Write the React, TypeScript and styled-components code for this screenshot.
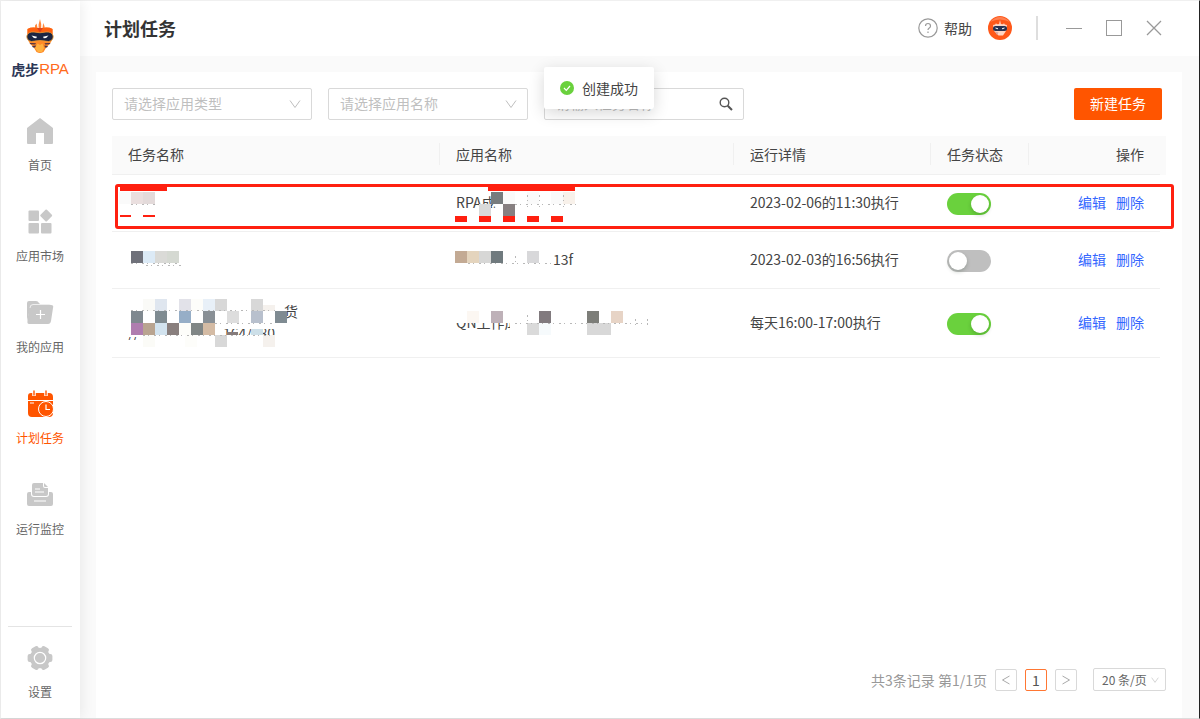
import React from "react";
import styled, { createGlobalStyle, css } from "styled-components";

const colors = {
  brand: "#ff5500",
  navy: "#2b3756",
  text: "#444444",
  muted: "#999999",
  icon: "#c8c8c8",
  line: "#f0f0f0",
  border: "#d9d9d9",
  surface: "#fafafa",
  link: "#3366ff",
  success: "#6ad13d",
  mark: "#ff2010",
};

const GlobalStyle = createGlobalStyle`
  *, *::before, *::after { box-sizing: border-box; }
  body {
    margin: 0;
    color: ${colors.text};
    background: #fff;
    font: 14px/22px "Noto Sans CJK SC", sans-serif;
  }
  button, input, select { font: inherit; color: inherit; }
`;

const Window = styled.div`
  display: flex;
  min-height: 100vh;
  border: 1px solid #f0f0f0;
  border-right-color: #222;
  border-bottom-color: #dcdcdc;
`;

const Sidebar = styled.nav`
  display: flex;
  flex: none;
  flex-direction: column;
  align-items: center;
  width: 79px;
  padding: 18px 8px 16px 7px;
  background: #fff;
  box-shadow: 2px 0 12px rgba(0, 0, 0, 0.07);
  z-index: 1;
`;

const Brand = styled.div`
  display: flex;
  flex-direction: column;
  align-items: center;
  gap: 3px;
  margin-bottom: 36px;
`;

const BrandName = styled.div`
  display: flex;
  align-items: center;
  height: 24px;
  color: ${colors.navy};
  font-size: 14px;
  font-weight: 700;
`;

const BrandSuffix = styled.span`
  color: #ff6a1a;
  font-family: "Liberation Sans Narrow", "Liberation Sans", sans-serif;
  font-size: 15px;
  font-weight: 400;
`;

const NavItem = styled.a<{ $active?: boolean }>`
  display: flex;
  flex-direction: column;
  align-items: center;
  gap: 10px;
  height: 91px;
  color: ${(p) => (p.$active ? colors.brand : "#666")};
  font-size: 12px;
  line-height: 20px;
  text-decoration: none;
  svg { color: ${(p) => (p.$active ? colors.brand : colors.icon)}; }
`;

const SettingsArea = styled.div`
  display: flex;
  justify-content: center;
  width: 100%;
  margin-top: auto;
  padding-top: 17px;
  border-top: 1px solid #e4e4e4;
  ${NavItem} { height: auto; }
`;

const Main = styled.main`
  display: flex;
  flex: 1;
  flex-direction: column;
  min-width: 0;
  background: ${colors.surface};
`;

const TopBar = styled.header`
  display: flex;
  align-items: center;
  justify-content: space-between;
  height: 55px;
  padding: 0 37px 2px 24px;
  background: #fff;
`;

const Title = styled.h1`
  margin: 0;
  color: #333;
  font-size: 18px;
  line-height: 26px;
`;

const TopActions = styled.div`
  display: flex;
  align-items: center;
  gap: 24px;
`;

const PlainButton = styled.button`
  display: flex;
  align-items: center;
  gap: 6px;
  padding: 0;
  border: 0;
  background: none;
  cursor: pointer;
`;

const Account = styled.div`
  display: flex;
  align-items: center;
  gap: 16px;
`;

const Divider = styled.span`
  width: 2px;
  height: 24px;
  margin-right: 4px;
  background: #dedede;
`;

const Card = styled.section`
  display: flex;
  flex: 1;
  flex-direction: column;
  margin: 16px 17px 0 16px;
  padding: 16px 16px 27px;
  background: #fff;
`;

const Filters = styled.form`
  display: flex;
  gap: 16px;
  margin-bottom: 16px;
  padding-right: 4px;
`;

const field = css`
  width: 100%;
  height: 32px;
  border: 1px solid ${colors.border};
  border-radius: 2px;
  background: #fff;
  outline: none;
  appearance: none;
`;

const Field = styled.label`
  display: grid;
  align-items: center;
  width: 200px;
  > * { grid-area: 1 / 1; }
  > svg { justify-self: end; margin-right: 11px; pointer-events: none; }
`;

const FilterSelect = styled.select`
  ${field}
  padding: 0 28px 2px 11px;
  color: #bfbfbf;
`;

const SearchInput = styled.input`
  ${field}
  padding: 0 36px 2px 11px;
  &::placeholder { color: #bfbfbf; opacity: 1; }
`;

const SearchButton = styled(PlainButton)`
  justify-self: end;
  margin-right: 11px;
`;

const CreateButton = styled.button`
  width: 88px;
  height: 32px;
  margin-left: auto;
  padding: 0 0 2px;
  border: 0;
  border-radius: 2px;
  color: #fff;
  background: ${colors.brand};
  cursor: pointer;
`;

const TableArea = styled.div`
  position: relative;
  padding-right: 6px;
`;

const Table = styled.table`
  width: 100%;
  border-collapse: separate;
  border-spacing: 0;
  table-layout: fixed;
`;

const HeadCell = styled.th`
  height: 39px;
  padding: 0 0 2px;
  border-bottom: 1px solid ${colors.line};
  background: ${colors.surface};
  font-weight: 400;
  text-align: left;
  &:last-child {
    box-shadow: 6px 0 0 ${colors.surface};
    text-align: right;
  }
`;

const HeadLabel = styled.div`
  padding: 0 16px;
  border-right: 1px solid ${colors.line};
  ${HeadCell}:last-child & { border-right: 0; }
`;

const Cell = styled.td`
  position: relative;
  height: 57px;
  padding: 11px 16px 13px;
  border-bottom: 1px solid ${colors.line};
`;

const NameText = styled.div<{ $align?: "right" }>`
  width: 170px;
  text-align: ${(p) => p.$align ?? "left"};
`;

const AppText = styled.div<{ $indent?: boolean }>`
  padding-left: ${(p) => (p.$indent ? "97px" : "0")};
`;

const MosaicLayer = styled.svg`
  position: absolute;
  top: 0;
  left: 0;
`;

const RowMark = styled.div`
  position: absolute;
  top: 48px;
  right: -8px;
  left: 3px;
  height: 45px;
  border: 3px solid ${colors.mark};
  border-radius: 3px;
  pointer-events: none;
`;

const Switch = styled.input`
  display: block;
  width: 44px;
  height: 22px;
  margin: 4px 0 0;
  padding: 2px;
  border-radius: 11px;
  background: #bfbfbf;
  appearance: none;
  cursor: pointer;
  &::before {
    display: block;
    width: 18px;
    height: 18px;
    border-radius: 50%;
    background: #fff;
    box-shadow: 0 2px 4px rgba(0, 35, 11, 0.2);
    content: "";
  }
  &:checked { background: ${colors.success}; }
  &:checked::before { margin-left: 22px; }
`;

const RowActions = styled.div`
  display: flex;
  justify-content: flex-end;
  gap: 10px;
`;

const Link = styled.a`
  color: ${colors.link};
  text-decoration: none;
`;

const Pagination = styled.footer`
  display: flex;
  align-items: center;
  justify-content: flex-end;
  gap: 8px;
  margin-top: auto;
  color: ${colors.muted};
`;

const PageButton = styled.button<{ $current?: boolean }>`
  display: flex;
  align-items: center;
  justify-content: center;
  width: 22px;
  height: 22px;
  padding: 0;
  border: 1px solid ${(p) => (p.$current ? "#ff7733" : colors.border)};
  border-radius: 2px;
  color: ${(p) => (p.$current ? "#555" : "#aaa")};
  background: #fff;
`;

const PageSize = styled(Field)`
  width: 73px;
  margin-left: 8px;
  > svg { margin-right: 7px; }
`;

const PageSizeSelect = styled.select`
  ${field}
  height: 23px;
  padding: 0 16px 0 8px;
  color: #666;
  font-size: 12px;
`;

const Toast = styled.div`
  position: absolute;
  top: 67px;
  left: calc(50% - 56px);
  display: flex;
  align-items: center;
  gap: 8px;
  height: 42px;
  padding: 0 16px;
  border-radius: 2px;
  background: #fff;
  box-shadow: 0 4px 16px rgba(0, 0, 0, 0.16);
  z-index: 2;
`;

function TigerLogo() {
  return (
    <svg width="28" height="35" viewBox="0 0 28 35" aria-hidden="true">
      <path d="M12.600 9V5.500L14 0l1.200 5V9zM9 9.500V6.500l1.600-2 1 5zM16.500 9.500l.6-5.500 1.400 3v2.500z" fill="#ff873c" />
      <path d="M1.500 10Q6 7.500 14 9.500Q22 7.500 26.500 10V19Q25 25 20.500 28L17.500 33Q14 35 10.500 33L7.500 28Q3 25 1.500 19Z" fill="#ff8a27" />
      <path d="M1.500 10Q6 7.500 14 9.500Q22 7.500 26.500 10V15H1.500Z" fill="#ff6010" />
      <path d="M11 9l3 4.500L17 9z" fill="#de421b" />
      <path d="M.8 17Q2 12.500 8 13Q14 14.500 20 13Q26 12.500 27.200 17Q27.500 21.500 22.500 22.500Q14 20.500 5.500 22.500Q.5 21.500 .8 17Z" fill="#1c2543" stroke="#ed9c35" strokeWidth=".8" />
      <path d="M5.500 16.500l5.500 1.200-.8 1.500Q7 19.200 5.500 16.500ZM22.500 16.500l-5.500 1.200 .8 1.500Q21 19.200 22.500 16.500Z" fill="#fff" />
      <path d="M3.500 24l6.500 .2-.8 1.200-4.500-.2zM6 27l4-.4-.6 1.800-2.400 .2zM24.500 24l-6 .2.800 1.200 4.200-.2zM22 27l-3.600-.4.6 1.800 2 .2z" fill="#493045" />
      <path d="M11.500 24.500l2.500 1.500 2.500-1.500 1.500 4.500-2 4h-4l-3-4z" fill="#ffb13f" />
    </svg>
  );
}

function Avatar() {
  return (
    <svg width="24" height="24" viewBox="0 0 24 24" role="img" aria-label="账户">
      <circle cx="12" cy="12" r="12" fill="#ff5819" />
      <path d="M2 6Q12-4 22 6Q12 1 2 6Z" fill="#ff8051" />
      <path d="M11 9l1-5 1 5zM7 10l1-3 1 2zM15 9l1-2 1 3z" fill="#ffe0d2" />
      <path d="M5 9Q12 7 19 9L18 15L15 19.500H10.500L6 15Z" fill="#ffd5c3" />
      <rect x="5" y="10" width="14" height="5" rx="2.5" fill="#283150" />
      <path d="M7.500 12l2.500 .8M16.500 12l-2.500 .8" stroke="#fff" />
      <path d="M7 15.500l3.500 1-1.500 2.500z" fill="#d9a3a0" />
    </svg>
  );
}

const HomeIcon = () => (
  <svg width="28" height="28" viewBox="0 0 28 28" fill="currentColor">
    <path d="M14 1 27 11V26a1 1 0 0 1-1 1H18V16H10V27H2a1 1 0 0 1-1-1V11Z" />
  </svg>
);

const MarketIcon = () => (
  <svg width="28" height="28" viewBox="0 0 28 28" fill="currentColor">
    <rect x="2.500" y="2.500" width="10.500" height="10.500" rx="1" />
    <rect x="2.500" y="15" width="10.500" height="10.500" rx="1" />
    <rect x="15" y="15" width="10.500" height="10.500" rx="1" />
    <rect x="15.700" y="3" width="9" height="9" rx="1" transform="rotate(45 20.200 7.500)" />
  </svg>
);

const FolderIcon = () => (
  <svg width="28" height="28" viewBox="0 0 28 28" fill="currentColor">
    <path d="M1 22V4Q1 2 3 2H10Q12 2 13 4L14 5H23Q25 5 25 7H7Q4 7 4 10Z" />
    <path d="M6 6H25Q28 6 27 9L25 22Q24.500 25 22 25H3Q1 25 1.500 22L3 9Q3.300 6 6 6Z" />
    <path d="M4 9Q4 5.500 7 5.500H25" fill="none" stroke="#fff" strokeWidth=".7" />
    <path d="M10 15.500H19M14.500 11V20" stroke="#fff" strokeWidth="1.200" />
  </svg>
);

const CalendarIcon = () => (
  <svg width="28" height="28" viewBox="0 0 28 28" fill="currentColor">
    <path d="M5 3H23Q27 3 27 7V10H2V6Q2 3 5 3ZM2 11H27V23Q27 27 23 27H6Q2 27 2 23Z" />
    <path d="M8 1V6M20 1V6" stroke="#fff" strokeWidth="3.500" />
    <path d="M8 1V5M20 1V5" stroke="currentColor" strokeWidth="1.400" strokeLinecap="round" />
    <path d="M4 13H8" stroke="#fff" />
    <circle cx="20" cy="19" r="7.500" stroke="#fff" />
    <path d="M20 14.500V19.500H24" fill="none" stroke="#fff" strokeWidth="1.200" />
  </svg>
);

const MonitorIcon = () => (
  <svg width="28" height="28" viewBox="0 0 28 28" fill="currentColor">
    <path d="M3 11H5V13Q5 16 8 16H20Q23 16 23 13V11H25Q27 11 27 13V23Q27 25 25 25H3Q1 25 1 23V13Q1 11 3 11Z" />
    <path d="M8 2H17V5Q17 7 19 7H22V13Q22 15 20 15H8Q6 15 6 13V4Q6 2 8 2ZM18 2L22 6H19Q18 6 18 5Z" />
    <path d="M9 8H14M9 11H18M8 20H20" stroke="#fff" strokeWidth="1.200" />
  </svg>
);

const GearIcon = () => (
  <svg width="28" height="28" viewBox="0 0 28 28" fill="currentColor">
    <circle cx="14" cy="14" r="10.300" />
    {[30, 90, 150].map((angle) => (
      <rect key={angle} x="10" y="1.600" width="8" height="24.800" rx="2" transform={`rotate(${angle} 14 14)`} />
    ))}
    <circle cx="14" cy="14" r="5.700" fill="none" stroke="#fff" strokeWidth="1.200" />
  </svg>
);

const Chevron = ({ size = 12 }: { size?: number }) => (
  <svg width={size} height={size} viewBox="0 0 12 12" fill="none" stroke="#bfbfbf" aria-hidden="true">
    <path d="M1 2.500 6 9.500 11 2.500" />
  </svg>
);

type Block = [x: number, y: number, fill: string, width?: number, height?: number];

/* Privacy mosaic laid over a cell's text. */
function Mosaic({ width, height, blocks, specks }: { width: number; height: number; blocks: Block[]; specks?: string }) {
  return (
    <MosaicLayer width={width} height={height} aria-hidden="true">
      {blocks.map(([x, y, fill, w = 12, h = 12], i) => (
        <rect key={i} x={x} y={y} width={w} height={h} fill={fill} />
      ))}
      {specks && <path d={specks} stroke="#b8b8b8" strokeDasharray="2 3 1 5" fill="none" />}
    </MosaicLayer>
  );
}

const red = colors.mark;

const rows = [
  {
    id: "1",
    name: (
      <Mosaic
        width={180}
        height={56}
        blocks={[
          [8, 12, red, 47, 4],
          [7, 17, "#fafafa"], [19, 17, "#eadfdf"], [31, 17, "#e3dada"],
          [8, 40, red, 11, 2], [31, 40, red, 12, 2],
        ]}
        specks="M19 29.500H43"
      />
    ),
    app: (
      <>
        <AppText>RPA成</AppText>
        <Mosaic
          width={200}
          height={56}
          blocks={[
            [15, 33, "#fff", 48, 9],
            [48, 11, red, 87, 5],
            [51, 17, "#777c7e"], [63, 17, "#fafafa"], [87, 17, "#fafafa"], [111, 17, "#fafafa"], [123, 17, "#f8f1ea"],
            [39, 29, "#d9d9d9"], [63, 29, "#878081"],
            [15, 41, red, 12, 6], [39, 41, red, 12, 6], [63, 41, red, 12, 6], [87, 41, red, 12, 6], [111, 41, red, 12, 6],
          ]}
          specks="M75 29.500H137M87.500 20V32M99.500 20V32M123.500 20V32"
        />
      </>
    ),
    detail: "2023-02-06的11:30执行",
    on: true,
  },
  {
    id: "2",
    name: (
      <Mosaic
        width={180}
        height={56}
        blocks={[[19, 19, "#6f717a"], [31, 19, "#dceaf6"], [43, 19, "#dadad7"], [55, 19, "#d5d9d2"]]}
        specks="M19 31.500H68M34 33.500H72"
      />
    ),
    app: (
      <>
        <AppText $indent>13f</AppText>
        <Mosaic
          width={112}
          height={56}
          blocks={[[15, 19, "#c3aa94"], [27, 19, "#e4d4bd"], [39, 19, "#d7d7d6"], [51, 19, "#707a7e"], [87, 19, "#d8d8da"]]}
          specks="M28 31.500H111M75.500 24V32"
        />
      </>
    ),
    detail: "2023-02-03的16:56执行",
    on: false,
  },
  {
    id: "3",
    name: (
      <>
        <NameText $align="right">货</NameText>
        <NameText>//&emsp;&emsp;&emsp;&emsp;&emsp;&emsp;164/180</NameText>
        <Mosaic
          width={200}
          height={68}
          blocks={[
            [14, 34, "#fff", 16, 14], [14, 51, "#fff", 16, 9], [30, 34, "#fff", 141, 6], [30, 46, "#fff", 150, 14],
            [31, 10, "#fafaf7"], [43, 10, "#dfe6ef"], [67, 10, "#e2e2e9"], [79, 10, "#fdfdfa"], [91, 10, "#e8f0f8"], [103, 10, "#d8d8d8"], [139, 10, "#d8d8d8"], [151, 16, "#f5f1ed", 12, 6],
            [19, 22, "#7f888f"], [43, 22, "#7f8b91"], [67, 22, "#96aec7"], [91, 22, "#899096"], [115, 22, "#dddddd"], [139, 22, "#b8c0cd"], [163, 22, "#7f8b92"],
            [19, 34, "#af7daf"], [31, 34, "#b9a490"], [43, 34, "#d2e3ef"], [55, 34, "#897f7e"], [67, 34, "#fdfdfa"], [79, 34, "#808686"], [91, 34, "#d4bba4"], [115, 43, "#857b7b", 11, 3], [139, 40, "#cddfe8", 12, 6],
            [31, 46, "#fbfbf7"], [73, 46, "#fdfdfa"], [103, 46, "#d8d8d8"], [151, 46, "#f5f1ed"],
          ]}
          specks="M19 21.500H163M103 34.500H163M31 46.500H163"
        />
      </>
    ),
    app: (
      <>
        <AppText>QN工作成</AppText>
        <Mosaic
          width={220}
          height={68}
          blocks={[
            [15, 22, "#fff", 64, 12], [70, 34, "#fff", 20, 12],
            [27, 22, "#fcf7f2"], [51, 22, "#beb1b8"], [99, 22, "#817a7e"], [147, 22, "#7d7e79"], [171, 22, "#e7d4c6"],
            [87, 34, "#dadada"], [99, 34, "#f6fafc"], [147, 34, "#d8d8d8"], [159, 34, "#d8d8d8"],
          ]}
          specks="M75 34.500H208M87.500 26V36M195.500 30V38M207.500 30V40"
        />
      </>
    ),
    detail: "每天16:00-17:00执行",
    on: true,
  },
];

const navItems = [
  { label: "首页", icon: <HomeIcon /> },
  { label: "应用市场", icon: <MarketIcon /> },
  { label: "我的应用", icon: <FolderIcon /> },
  { label: "计划任务", icon: <CalendarIcon />, active: true },
  { label: "运行监控", icon: <MonitorIcon /> },
];

const columns = [
  { label: "任务名称", width: "31.3%" },
  { label: "应用名称", width: "28.05%" },
  { label: "运行详情", width: "18.8%" },
  { label: "任务状态", width: "9.35%" },
  { label: "操作", width: "12.5%" },
];

export default function App() {
  return (
    <>
      <GlobalStyle />
      <Window>
        <Sidebar>
          <Brand>
            <TigerLogo />
            <BrandName>虎步<BrandSuffix>RPA</BrandSuffix></BrandName>
          </Brand>
          {navItems.map((item) => (
            <NavItem key={item.label} href="#" $active={item.active} aria-current={item.active ? "page" : undefined}>
              {item.icon}
              {item.label}
            </NavItem>
          ))}
          <SettingsArea>
            <NavItem href="#"><GearIcon />设置</NavItem>
          </SettingsArea>
        </Sidebar>

        <Main>
          <TopBar>
            <Title>计划任务</Title>
            <TopActions>
              <Account>
                <PlainButton type="button">
                  <svg width="20" height="20" viewBox="0 0 20 20" fill="none" stroke="#999" strokeWidth="1.200">
                    <circle cx="10" cy="10" r="9.200" />
                    <path d="M7.500 8Q7.500 5.500 10 5.500T12.500 8Q12.500 9.300 11 10.200Q10 10.900 10 12M10 13.500V15" />
                  </svg>
                  帮助
                </PlainButton>
                <Avatar />
              </Account>
              <Divider />
              <PlainButton type="button" aria-label="最小化">
                <svg width="16" height="16" stroke="#999"><path d="M0 8.500H16" /></svg>
              </PlainButton>
              <PlainButton type="button" aria-label="最大化">
                <svg width="16" height="16" stroke="#999" fill="none"><rect x=".5" y=".5" width="15" height="15" /></svg>
              </PlainButton>
              <PlainButton type="button" aria-label="关闭">
                <svg width="16" height="16" stroke="#999" strokeWidth="1.300"><path d="M1 1 15 15M15 1 1 15" /></svg>
              </PlainButton>
            </TopActions>
          </TopBar>

          <Card>
            <Filters onSubmit={(e) => e.preventDefault()}>
              <Field>
                <FilterSelect aria-label="应用类型"><option>请选择应用类型</option></FilterSelect>
                <Chevron />
              </Field>
              <Field>
                <FilterSelect aria-label="应用名称"><option>请选择应用名称</option></FilterSelect>
                <Chevron />
              </Field>
              <Field>
                <SearchInput aria-label="任务名称" placeholder="请输入任务名称" />
                <SearchButton type="submit" aria-label="搜索">
                  <svg width="14" height="14" viewBox="0 0 14 14" fill="none" stroke="#555" strokeWidth="1.400">
                    <circle cx="5.500" cy="5.500" r="4.300" />
                    <path d="M8.700 8.700 13 13" strokeWidth="2" />
                  </svg>
                </SearchButton>
              </Field>
              <CreateButton type="button">新建任务</CreateButton>
            </Filters>

            <TableArea>
              <Table>
                <colgroup>
                  {columns.map((c) => <col key={c.label} width={c.width} />)}
                </colgroup>
                <thead>
                  <tr>
                    {columns.map((c) => (
                      <HeadCell key={c.label} scope="col"><HeadLabel>{c.label}</HeadLabel></HeadCell>
                    ))}
                  </tr>
                </thead>
                <tbody>
                  {rows.map((row) => (
                    <tr key={row.id}>
                      <Cell>{row.name}</Cell>
                      <Cell>{row.app}</Cell>
                      <Cell>{row.detail}</Cell>
                      <Cell><Switch type="checkbox" role="switch" aria-label="任务状态" defaultChecked={row.on} /></Cell>
                      <Cell>
                        <RowActions>
                          <Link href="#">编辑</Link>
                          <Link href="#">删除</Link>
                        </RowActions>
                      </Cell>
                    </tr>
                  ))}
                </tbody>
              </Table>
              <RowMark />
            </TableArea>

            <Pagination>
              <span>共3条记录 第1/1页</span>
              <PageButton type="button" aria-label="上一页">
                <svg width="10" height="12" fill="none" stroke="currentColor"><path d="M8.500 2 1.500 6 8.500 10" /></svg>
              </PageButton>
              <PageButton type="button" $current aria-current="page">1</PageButton>
              <PageButton type="button" aria-label="下一页">
                <svg width="10" height="12" fill="none" stroke="currentColor"><path d="M1.500 2 8.500 6 1.500 10" /></svg>
              </PageButton>
              <PageSize>
                <PageSizeSelect aria-label="每页条数"><option>20 条/页</option></PageSizeSelect>
                <Chevron size={8} />
              </PageSize>
            </Pagination>
          </Card>
        </Main>

        <Toast role="status">
          <svg width="14" height="14" viewBox="0 0 14 14" fill="none">
            <circle cx="7" cy="7" r="7" fill={colors.success} />
            <path d="M4 7 6.300 9.300 10 5" stroke="#fff" strokeWidth="1.200" />
          </svg>
          创建成功
        </Toast>
      </Window>
    </>
  );
}
